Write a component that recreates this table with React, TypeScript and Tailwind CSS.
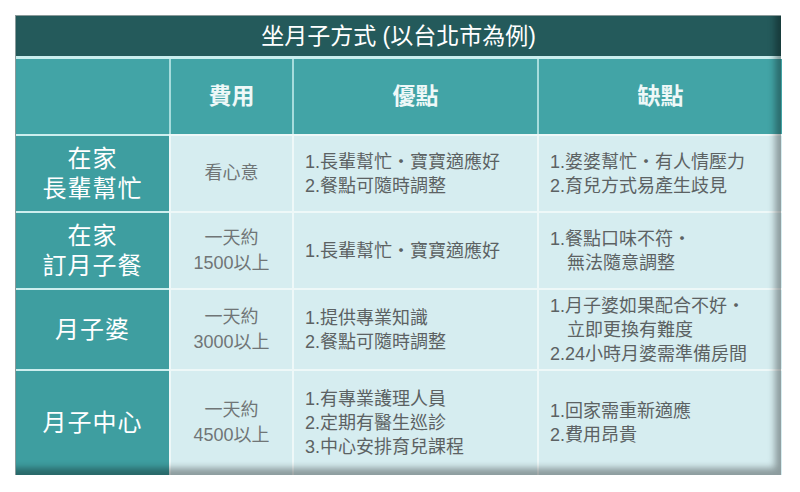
import React from "react";

type Row = {
  name: string[];
  fee: string[];
  pros: string[];
  cons: string[];
  h: string;
};

const rows: Row[] = [
  {
    name: ["在家", "長輩幫忙"],
    fee: ["看心意"],
    pros: ["1.長輩幫忙‧寶寶適應好", "2.餐點可隨時調整"],
    cons: ["1.婆婆幫忙‧有人情壓力", "2.育兒方式易產生歧見"],
    h: "h-[77px]",
  },
  {
    name: ["在家", "訂月子餐"],
    fee: ["一天約", "1500以上"],
    pros: ["1.長輩幫忙‧寶寶適應好"],
    cons: ["1.餐點口味不符‧", "  無法隨意調整"],
    h: "h-[77px]",
  },
  {
    name: ["月子婆"],
    fee: ["一天約", "3000以上"],
    pros: ["1.提供專業知識", "2.餐點可隨時調整"],
    cons: ["1.月子婆如果配合不好‧", "  立即更換有難度", "2.24小時月婆需準備房間"],
    h: "h-[81px]",
  },
  {
    name: ["月子中心"],
    fee: ["一天約", "4500以上"],
    pros: ["1.有專業護理人員", "2.定期有醫生巡診", "3.中心安排育兒課程"],
    cons: ["1.回家需重新適應", "2.費用昂貴"],
    h: "h-[106px]",
  },
];

function Lines({ lines }: { lines: string[] }) {
  return (
    <div className="leading-[24px]">
      {lines.map((l, i) =>
        l.startsWith("  ") ? (
          <div key={i} className="pl-[17px]">
            {l.trim()}
          </div>
        ) : (
          <div key={i}>{l}</div>
        )
      )}
    </div>
  );
}

export default function App() {
  return (
    <div
      className="w-[800px] h-[492px] bg-white pt-[15px] pl-[15px]"
      style={{ fontFamily: '"Liberation Sans", "Noto Sans CJK TC", sans-serif' }}
    >
      <div className="relative w-[766px] border-l border-t border-[#8a9a9a]">
        <div className="h-[40px] bg-[#245a5b] flex items-center justify-center text-[23px] text-white">
          坐月子方式 (以台北市為例)
        </div>
        <div className="h-[3px] bg-[#c9eeee]" />

        <div className="grid grid-cols-[153px_123px_245px_245px]">
          <div className="h-[75px] bg-[#42a4a6]" />
          <div className="h-[75px] bg-[#42a4a6] border-l-2 border-[#a6dcdc] flex items-center justify-center text-[23px] font-bold text-[#eef8f8]">
            費用
          </div>
          <div className="h-[75px] bg-[#42a4a6] border-l-2 border-[#a6dcdc] flex items-center justify-center text-[23px] font-bold text-[#eef8f8]">
            優點
          </div>
          <div className="h-[75px] bg-[#42a4a6] border-l-2 border-[#a6dcdc] flex items-center justify-center text-[23px] font-bold text-[#eef8f8]">
            缺點
          </div>

          {rows.map((r, i) => (
            <React.Fragment key={i}>
              <div
                className={`${r.h} bg-[#3e9ea0] border-t-2 border-[#cdeeee] flex flex-col items-center justify-center text-[24px] leading-[30px] tracking-[1px] text-white`}
              >
                {r.name.map((n) => (
                  <div key={n}>{n}</div>
                ))}
              </div>
              <div
                className={`${r.h} bg-[#d6edf0] border-t-2 border-l-2 border-[#eef8f8] flex flex-col items-center justify-center text-[18px] leading-[25px] text-[#707576]`}
              >
                {r.fee.map((n) => (
                  <div key={n}>{n}</div>
                ))}
              </div>
              <div
                className={`${r.h} bg-[#d6edf0] border-t-2 border-l-2 border-[#eef8f8] flex items-center pl-[11px] text-[18px] text-[#5c6263]`}
              >
                <Lines lines={r.pros} />
              </div>
              <div
                className={`${r.h} bg-[#d6edf0] border-t-2 border-l-2 border-[#eef8f8] flex items-center pl-[11px] text-[18px] text-[#5c6263]`}
              >
                <Lines lines={r.cons} />
              </div>
            </React.Fragment>
          ))}
        </div>

        <div className="pointer-events-none absolute inset-0 shadow-[inset_-6px_-7px_7px_rgba(0,0,0,0.35)]" />
      </div>
    </div>
  );
}
